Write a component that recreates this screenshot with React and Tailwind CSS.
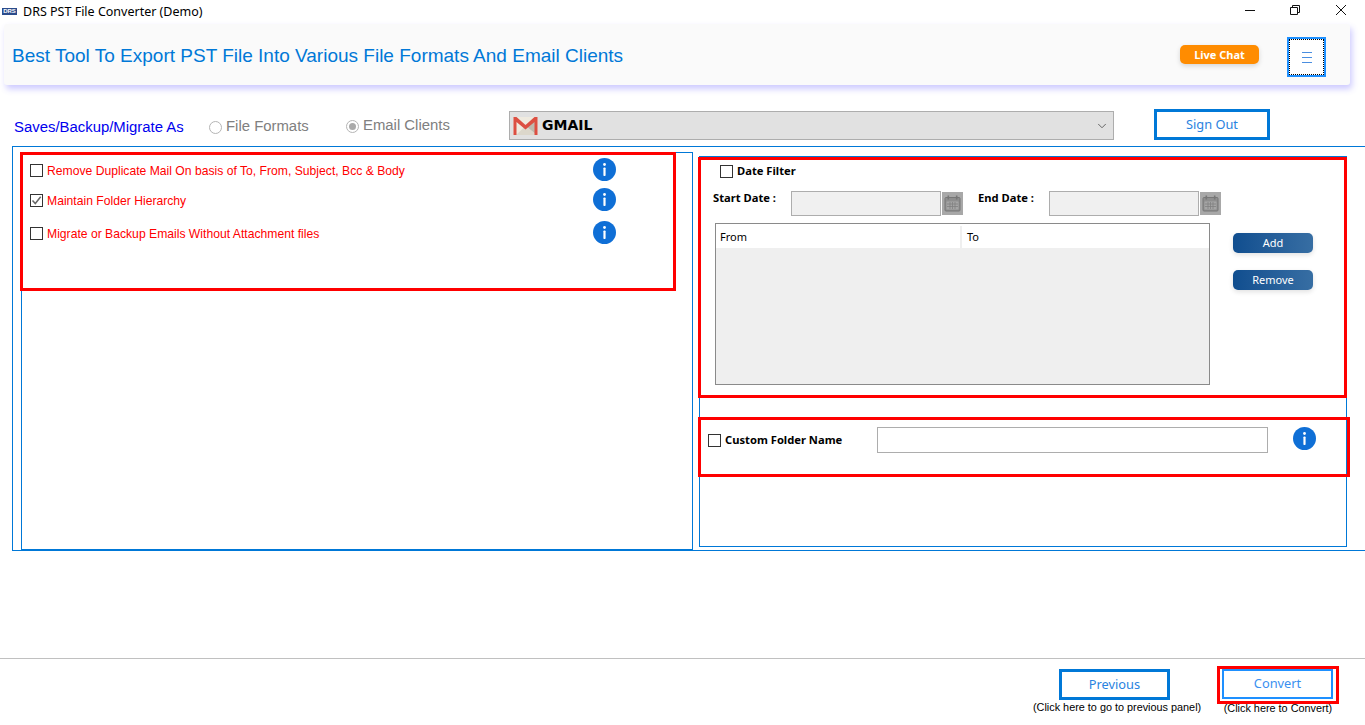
import React from "react";
import { ChevronDown } from "lucide-react";

const sans = "font-['Liberation_Sans',Arial,sans-serif]";
const tahoma = "font-['Noto_Sans',sans-serif]";

function InfoIcon() {
  return (
    <svg width="23" height="23" viewBox="0 0 23 23" className="shrink-0">
      <circle cx="11.5" cy="11.5" r="11.5" fill="#0f6fd6" />
      <circle cx="11.5" cy="6.5" r="1.4" fill="#fff" />
      <rect x="10.4" y="9.5" width="2.2" height="8.5" rx="0.8" fill="#fff" />
    </svg>
  );
}

function CheckBox({ checked, className = "" }) {
  return (
    <span className={`flex h-[13px] w-[13px] shrink-0 items-center justify-center border border-[#333] bg-white ${className}`}>
      {checked && (
        <svg width="11" height="11" viewBox="0 0 11 11">
          <path d="M1.5 5.5 L4.3 8.5 L9.7 1.8" fill="none" stroke="#666" strokeWidth="1.5" />
        </svg>
      )}
    </span>
  );
}

function Radio({ checked, className = "" }) {
  return (
    <span className={`flex h-[13px] w-[13px] shrink-0 items-center justify-center rounded-full border border-[#b5b5b5] bg-white ${className}`}>
      {checked && <span className="h-[7px] w-[7px] rounded-full bg-[#aaa]" />}
    </span>
  );
}

function GmailIcon() {
  return (
    <svg width="25" height="20" viewBox="0 0 25 20" className="shrink-0">
      <rect x="0.5" y="1" width="24" height="18" fill="#efeadf" />
      <path d="M3 19 L12.5 10 L24 19 Z" fill="#dcd7cb" />
      <path d="M24 3 L14 11 L24 19 Z" fill="#bdb9ae" />
      <path d="M0.5 1 L3.5 1 L12.5 9 L21.5 1 L24.5 1 L24.5 19 L21.5 19 L21.5 6 L12.5 13.5 L3.5 6 L3.5 19 L0.5 19 Z" fill="#dc4f42" />
    </svg>
  );
}

function CalendarIcon() {
  return (
    <span className="flex h-[23px] w-[21px] shrink-0 items-center justify-center bg-[#a8a8a8]">
      <svg width="17" height="17" viewBox="0 0 17 17">
        <rect x="1" y="2.5" width="15" height="13.5" rx="1" fill="#8e8e8e" stroke="#777" />
        <rect x="2.5" y="6.5" width="12" height="8" fill="#a5a5a5" />
        <path d="M3 9 H14 M3 11.5 H14 M6 7 V14 M8.5 7 V14 M11 7 V14" stroke="#808080" strokeWidth="0.8" />
        <rect x="3.5" y="0.5" width="1.6" height="4" fill="#777" />
        <rect x="11.9" y="0.5" width="1.6" height="4" fill="#777" />
      </svg>
    </span>
  );
}

function OptionRow({ label, checked, className }) {
  return (
    <div className={`flex items-center ${className}`}>
      <CheckBox checked={checked} className="mt-[2px]" />
      <span className={`ml-[4px] mt-[3px] w-[546px] text-[12.17px] text-[#ff0000] ${sans}`}>{label}</span>
      <InfoIcon />
    </div>
  );
}

function DateField({ label, labelClass }) {
  return (
    <div className="flex items-center">
      <span className={`self-start text-[11.2px] font-bold leading-[14px] text-black ${tahoma} ${labelClass}`}>
        {label}
      </span>
      <span className="h-[25px] w-[150px] border border-[#adadad] bg-[#f0f0f0]" />
      <span className="ml-[1px]">
        <CalendarIcon />
      </span>
    </div>
  );
}

function GradientButton({ children }) {
  return (
    <button className={`h-[20px] w-[80px] rounded-[5px] bg-gradient-to-r from-[#104e8f] to-[#376ea3] text-[11px] text-white shadow-[0_2px_5px_rgba(0,0,0,0.12)] ${tahoma}`}>
      {children}
    </button>
  );
}

export default function App() {
  return (
    <div className={`flex h-[725px] w-[1365px] flex-col overflow-hidden bg-white ${sans}`}>
      {/* Title bar */}
      <div className="flex h-[24px] items-center pl-[2px]">
        <span className="-mt-[2px] flex h-[7px] w-[15px] items-center justify-center bg-[#2b4c8c] text-[6px] font-bold leading-none text-white">DRS</span>
        <span className={`ml-[6px] mt-[1px] text-[12.5px] text-black ${tahoma}`}>DRS PST File Converter (Demo)</span>
        <div className="ml-auto flex items-start self-start pt-[5px]">
          <svg width="10" height="10" viewBox="0 0 10 10" className="mr-[35px]">
            <path d="M0 5.5 H10" stroke="#111" strokeWidth="1" />
          </svg>
          <svg width="10" height="10" viewBox="0 0 10 10" className="mr-[36px]">
            <path d="M2.5 2.5 V0.5 H9.5 V7.5 H7.5 M0.5 2.5 H7.5 V9.5 H0.5 Z" fill="none" stroke="#111" strokeWidth="1" />
          </svg>
          <svg width="10" height="10" viewBox="0 0 10 10" className="mr-[19px]">
            <path d="M0 0 L10 10 M10 0 L0 10" stroke="#111" strokeWidth="1" />
          </svg>
        </div>
      </div>

      {/* Header card */}
      <div className="ml-[4px] flex h-[61px] w-[1346px] items-center rounded-[3px] bg-[#fafafa] pl-[8px] shadow-[2px_4px_6px_rgba(90,80,255,0.3)]">
        <span className={`mt-[4px] text-[19px] text-[#0078d7] ${sans}`}>Best Tool To Export PST File Into Various File Formats And Email Clients</span>
        <button className={`ml-auto flex h-[19px] w-[79px] items-center justify-center rounded-[5px] bg-[#ff8c00] pt-px text-[11px] font-bold text-white shadow-[0_2px_5px_rgba(0,0,0,0.15)] ${tahoma}`}>
          Live Chat
        </button>
        <button className="ml-[28px] mr-[24px] mt-[5px] flex h-[40px] w-[39px] items-center justify-center border-2 border-[#1e90ff] bg-white">
          <span className="flex h-full w-full flex-col items-center justify-center gap-[4px] border border-dotted border-black">
            <span className="h-px w-[10px] bg-[#4a8ee0]" />
            <span className="h-px w-[10px] bg-[#4a8ee0]" />
            <span className="h-px w-[10px] bg-[#4a8ee0]" />
          </span>
        </button>
      </div>

      {/* Export type row */}
      <div className="ml-[14px] mt-[26px] flex h-[29px] items-center">
        <span className={`mt-[3px] w-[195px] text-[14.9px] text-[#0000ee] ${sans}`}>Saves/Backup/Migrate As</span>
        <Radio className="mt-[3px]" />
        <span className={`ml-[4px] mt-[1px] w-[120px] text-[14.9px] text-[#808080] ${sans}`}>File Formats</span>
        <Radio checked className="mt-[1px]" />
        <span className={`ml-[4px] w-[146px] text-[14.9px] text-[#808080] ${sans}`}>Email Clients</span>
        <div className="flex h-[29px] w-[605px] items-center border border-[#adadad] bg-[#e1e1e1] pl-[3px] pr-[3px]">
          <GmailIcon />
          <span className="ml-[4px] font-['DejaVu_Sans',sans-serif] text-[14px] font-bold text-black">GMAIL</span>
          <ChevronDown size={14} strokeWidth={1.5} className="ml-auto mr-[1px] text-[#555]" />
        </div>
        <button className={`mb-[2px] ml-[40px] h-[31px] w-[116px] border-[3px] border-[#0078d7] bg-white text-[12.8px] text-[#2a83e0] ${tahoma}`}>
          Sign Out
        </button>
      </div>

      {/* Main panel */}
      <div className="ml-[12px] mt-[6px] flex h-[405px] border-y border-l border-[#0078d7] pl-[8px]">
        <div className="mt-[5px] h-[398px] w-[672px] border-x border-b border-t border-[#0078d7]">
          <div className="-ml-[2px] -mt-px h-[139px] w-[656px] border-[3px] border-[#ff0000] pl-[7px] pt-[3px]">
            <OptionRow className="h-[23px]" label="Remove Duplicate Mail On basis of To, From, Subject, Bcc & Body" />
            <OptionRow className="mt-[7px] h-[23px]" checked label="Maintain Folder Hierarchy" />
            <OptionRow className="mt-[10px] h-[23px]" label="Migrate or Backup Emails Without Attachment files" />
          </div>
        </div>

        <div className="ml-[6px] mt-[9px] h-[391px] w-[648px] border border-[#0078d7]">
          <div className="-ml-[2px] h-[241px] w-[649px] border-[3px] border-[#ff0000] pt-[3px]">
            <div className="ml-[19px] flex h-[17px] items-center">
              <CheckBox />
              <span className={`ml-[4px] text-[11.2px] font-bold text-black ${tahoma}`}>Date Filter</span>
            </div>
            <div className="ml-[12px] mt-[11px] flex">
              <DateField label="Start Date :" labelClass="w-[78px]" />
              <div className="ml-[15px]">
                <DateField label="End Date :" labelClass="w-[71px]" />
              </div>
            </div>
            <div className="flex">
              <div className={`ml-[14px] mt-[7px] h-[162px] w-[495px] border border-[#8a8a8a] bg-[#efefef] text-[11px] text-black ${tahoma}`}>
                <div className="flex h-[24px] bg-white pt-[2px]">
                  <span className="flex w-[246px] items-center border-r-2 border-[#efefef] pl-[4px]">From</span>
                  <span className="flex items-center pl-[5px]">To</span>
                </div>
              </div>
              <div className="ml-[23px] mt-[17px] flex flex-col gap-[17px]">
                <GradientButton>Add</GradientButton>
                <GradientButton>Remove</GradientButton>
              </div>
            </div>
          </div>

          <div className="-ml-[2px] mt-[19px] flex h-[60px] w-[652px] border-[3px] border-[#ff0000] pl-[7px] pt-[7px]">
            <div className="flex items-start">
              <CheckBox className="mt-[7px]" />
              <span className={`ml-[4px] mt-[5px] w-[152px] text-[11.2px] font-bold text-black ${tahoma}`}>Custom Folder Name</span>
              <span className="h-[26px] w-[391px] border border-[#adadad] bg-white" />
              <span className="ml-[25px]">
                <InfoIcon />
              </span>
            </div>
          </div>
        </div>
      </div>

      {/* Footer */}
      <div className="mt-[107px] flex flex-1 justify-end border-t border-[#c0c0c0]">
        <div className="mr-[17px] mt-[10px] flex w-[167px] flex-col">
          <button className={`ml-[26px] h-[31px] w-[111px] border-[3px] border-[#0078d7] bg-white text-[12.8px] text-[#2a83e0] ${tahoma}`}>Previous</button>
          <span className={`-mt-[1px] whitespace-nowrap text-[10.85px] text-black ${sans}`}>(Click here to go to previous panel)</span>
        </div>
        <div className="mr-[26px] mt-[7px] flex w-[122px] flex-col items-center">
          <div className="h-[38px] w-[122px] border-[3px] border-[#ff0000] pb-[2px] pl-[2px] pr-[3px]">
            <button className={`h-full w-full border-2 border-[#1e90ff] bg-white text-[12.8px] text-[#3a90f0] ${tahoma}`}>Convert</button>
          </div>
          <span className={`-mt-[4px] whitespace-nowrap text-[10.85px] text-black ${sans}`}>(Click here to Convert)</span>
        </div>
      </div>
    </div>
  );
}
